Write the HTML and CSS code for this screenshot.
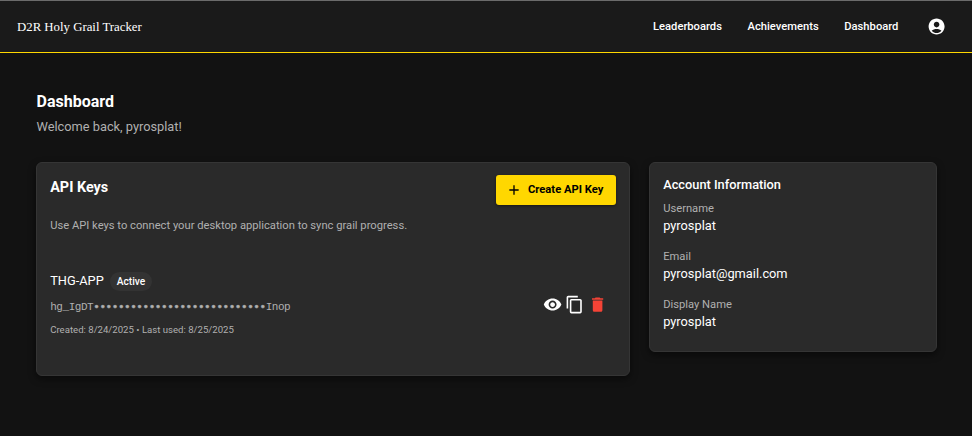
FILE: index.html
```html
<!DOCTYPE html>
<html lang="en">
<head>
<meta charset="utf-8">
<title>D2R Holy Grail Tracker</title>
<link rel="stylesheet" href="styles.css">
</head>
<body>
<header class="appbar">
  <a class="brand">D2R Holy Grail Tracker</a>
  <nav class="nav">
    <a class="nav-leader">Leaderboards</a>
    <a class="nav-achieve">Achievements</a>
    <a class="nav-dash">Dashboard</a>
    <svg class="avatar" viewBox="0 0 24 24"><path d="M12 2C6.48 2 2 6.48 2 12s4.48 10 10 10 10-4.48 10-10S17.52 2 12 2m0 4c1.93 0 3.5 1.57 3.5 3.5S13.93 13 12 13s-3.5-1.57-3.5-3.5S10.07 6 12 6m0 14c-2.03 0-4.43-.82-6.14-2.88C7.55 15.8 9.68 15 12 15s4.45.8 6.14 2.12C16.43 19.18 14.03 20 12 20"/></svg>
  </nav>
</header>
<main class="page">
  <h1 class="title">Dashboard</h1>
  <p class="welcome">Welcome back, pyrosplat!</p>
  <div class="columns">
    <section class="card keys">
      <div class="keys-head">
        <h2 class="keys-title">API Keys</h2>
        <button class="create">
          <svg class="plus" viewBox="0 0 24 24"><path d="M19 13h-6v6h-2v-6H5v-2h6V5h2v6h6z"/></svg>
          <span>Create API Key</span>
        </button>
      </div>
      <p class="hint">Use API keys to connect your desktop application to sync grail progress.</p>
      <div class="key">
        <div class="key-info">
          <div class="key-name"><span class="name">THG-APP</span><span class="chip">Active</span></div>
          <div class="secret">hg_IgDT<span class="mask">••••••••••••••••••••••••••••</span>Inop</div>
          <div class="dates">Created: 8/24/2025 • Last used: 8/25/2025</div>
        </div>
        <div class="actions">
          <svg viewBox="0 0 24 24"><path d="M12 4.5C7 4.5 2.73 7.61 1 12c1.73 4.39 6 7.5 11 7.5s9.27-3.11 11-7.5c-1.73-4.39-6-7.5-11-7.5M12 17c-2.76 0-5-2.24-5-5s2.24-5 5-5 5 2.24 5 5-2.24 5-5 5m0-8c-1.66 0-3 1.34-3 3s1.34 3 3 3 3-1.34 3-3-1.34-3-3-3"/></svg>
          <svg class="copy" viewBox="0 0 24 24"><path d="M16 1H4c-1.1 0-2 .9-2 2v14h2V3h12zm3 4H8c-1.1 0-2 .9-2 2v14c0 1.1.9 2 2 2h11c1.1 0 2-.9 2-2V7c0-1.1-.9-2-2-2m0 16H8V7h11z"/></svg>
          <svg class="delete" viewBox="0 0 24 24"><path d="M6 19c0 1.1.9 2 2 2h8c1.1 0 2-.9 2-2V7H6zM19 4h-3.5l-1-1h-5l-1 1H5v2h14z"/></svg>
        </div>
      </div>
    </section>
    <aside class="card account">
      <h2 class="account-title">Account Information</h2>
      <dl class="fields">
        <dt>Username</dt><dd>pyrosplat</dd>
        <dt>Email</dt><dd>pyrosplat@gmail.com</dd>
        <dt>Display Name</dt><dd>pyrosplat</dd>
      </dl>
    </aside>
  </div>
</main>
</body>
</html>
```
FILE: styles.css
```css
* { box-sizing: border-box; margin: 0; padding: 0; }
body {
  background: #121212;
  color: #fff;
  font-family: Roboto, "Liberation Sans", sans-serif;
  font-size: 12.8px;
  min-height: 436px;
}
svg { fill: currentColor; display: block; }
.appbar {
  height: 53px;
  padding: 0 26px 0 17px;
  display: flex;
  align-items: center;
  justify-content: space-between;
  background: #1a1a1a;
  border-top: 1px solid #6b6b6b;
  border-bottom: 1px solid #ffd700;
}
.brand { font: 12.8px/20px "Liberation Serif", serif; }
.nav { display: flex; align-items: center; font-size: 11.2px; font-weight: 500; line-height: 20px; }
.nav-leader { margin-right: 25.6px; }
.nav-achieve { margin-right: 25.6px; }
.nav-dash { margin-right: 28.4px; }
.avatar { width: 19.2px; height: 19.2px; }
.page { padding: 37px 35px 0 36px; }
.title { font-size: 16px; line-height: 24px; font-weight: 700; padding-left: .5px; }
.welcome { color: #b0b0b0; line-height: 19px; margin-top: 3px; padding-left: .5px; }
.columns { display: flex; align-items: flex-start; gap: 19px; margin-top: 26px; }
.card {
  background: #2a2a2a;
  border: 1px solid #353535;
  border-radius: 6px;
  box-shadow: 0 3px 7px rgba(0, 0, 0, .5);
}
.keys { width: 594px; height: 214px; padding: 12px 13px 12px 13.2px; }
.keys-head { display: flex; justify-content: space-between; }
.keys-title { font-size: 14.4px; line-height: 26px; font-weight: 700; }
.create {
  width: 120px;
  height: 30px;
  display: flex;
  align-items: center;
  padding-left: 10px;
  gap: 6px;
  border: 0;
  border-radius: 3px;
  background: #ffd700;
  color: #000;
  font: 700 11.2px/20px Roboto, sans-serif;
  box-shadow: 0 1px 3px rgba(0, 0, 0, .45);
}
.plus { width: 16px; height: 16px; }
.hint { color: #b0b0b0; font-size: 11.2px; line-height: 16px; margin-top: 13px; }
.key { display: flex; justify-content: space-between; margin-top: 38px; }
.key-name { display: flex; align-items: center; gap: 6px; height: 19px; }
.name { font-size: 12.8px; line-height: 16px; margin-top: -1px; }
.chip {
  height: 19px;
  padding: 0 7px;
  border-radius: 10px;
  background: #333;
  font-size: 10.2px;
  font-weight: 500;
  line-height: 19px;
}
.secret {
  color: #b0b0b0;
  font: 11px/16px "Liberation Mono", monospace;
  letter-spacing: -.445px;
  margin-top: 8px;
}
.mask { -webkit-text-stroke: .5px #b0b0b0; }
.dates { color: #b0b0b0; font-size: 9.6px; line-height: 16px; margin-top: 7px; }
.actions { display: flex; gap: 3.2px; margin-top: 23px; padding-right: 8.8px; }
.actions svg { width: 19.2px; height: 19.2px; }
.actions .copy { margin: 0 1px 0 -1px; }
.actions .delete { color: #f44336; }
.account { width: 288px; height: 190px; padding: 12px 13px 12px 13.2px; }
.account-title { font-size: 12.8px; line-height: 20px; font-weight: 500; }
.fields dt { color: #b0b0b0; font-size: 11.2px; line-height: 16px; margin-top: 6px; }
.fields dd { font-size: 12.8px; line-height: 18px; margin-bottom: 14px; }
.fields dd + dt { margin-top: 0; }
```
